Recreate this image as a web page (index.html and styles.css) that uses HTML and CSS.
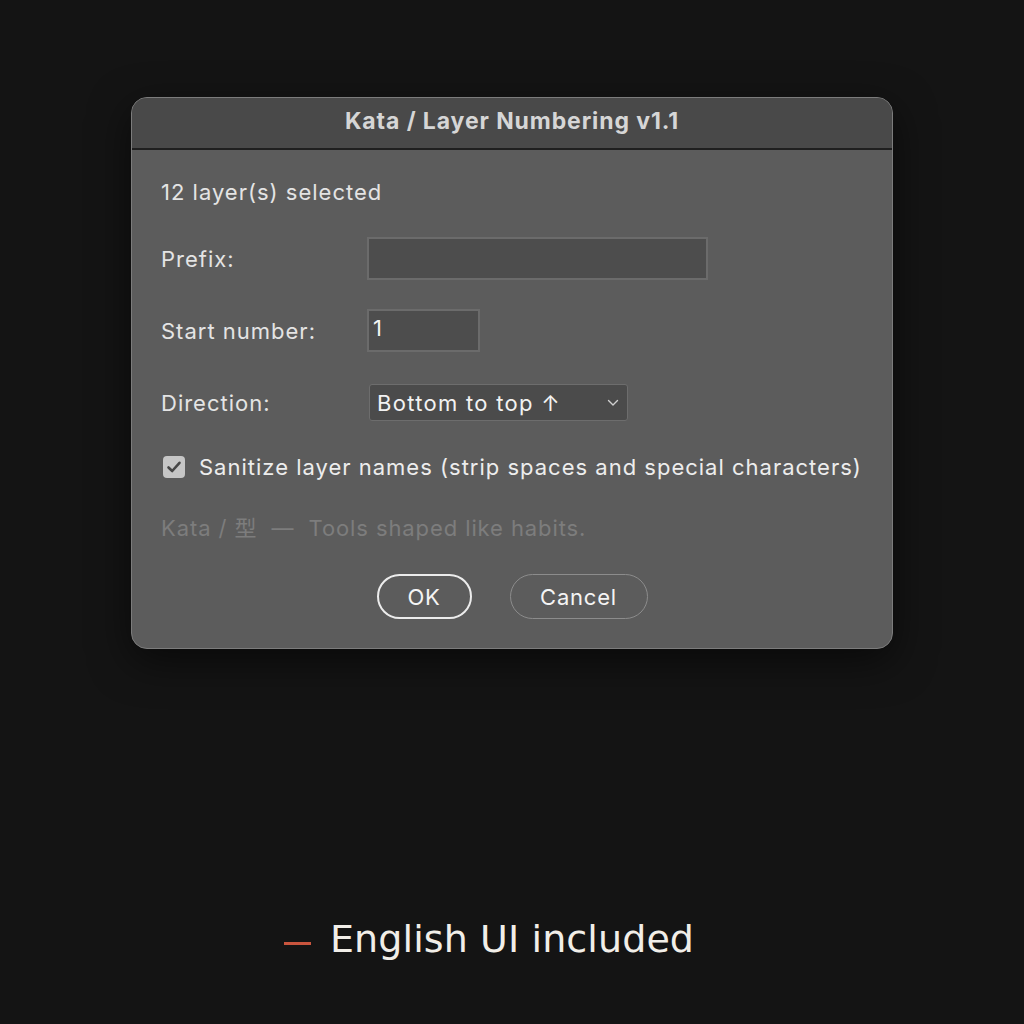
FILE: index.html
```html
<!doctype html>
<html lang="en">
<head>
    <meta charset="utf-8"/>
    <title>Kata / Layer Numbering</title>
    <link rel="stylesheet" href="styles.css">
</head>
<body>
    <div class="page">
        <div class="dialog">
            <div class="titlebar">Kata / Layer Numbering v1.1</div>
            <div class="content">
                <div class="count">12 layer(s) selected</div>
                <div class="rows">
                    <div class="row">
                        <label class="label">Prefix:</label>
                        <div class="field wide"></div>
                    </div>
                    <div class="row">
                        <label class="label">Start number:</label>
                        <div class="field short">1</div>
                    </div>
                    <div class="row">
                        <label class="label">Direction:</label>
                        <div class="select">
                            <span>Bottom to top ↑</span>
                            <svg class="chevron" width="12" height="8" viewBox="0 0 12 8">
                                <path d="M1.5 1.5 L6 6 L10.5 1.5" fill="none" stroke="#d0d0d0" stroke-width="1.4" stroke-linecap="round" stroke-linejoin="round"/>
                            </svg>
                        </div>
                    </div>
                    <div class="check-row">
                        <span class="checkbox">
                            <svg width="22" height="22" viewBox="0 0 22 22">
                                <path d="M5.5 11.5 L9.2 15 L16.5 6.8" fill="none" stroke="#474747" stroke-width="2.6" stroke-linecap="round" stroke-linejoin="round"/>
                            </svg>
                        </span>
                        <span>Sanitize layer names (strip spaces and special characters)</span>
                    </div>
                </div>
                <div class="tagline">Kata / 型 &nbsp;—&nbsp; Tools shaped like habits.</div>
                <div class="buttons">
                    <button class="btn ok">OK</button>
                    <button class="btn cancel">Cancel</button>
                </div>
            </div>
        </div>

        <div class="caption">
            <span class="dash"></span>
            <span>English UI included</span>
        </div>
    </div>
</body>
</html>
```
FILE: styles.css
```css
body {
    margin: 0;
    background: #141414;
    font-family: Inter, "Noto Sans", "Noto Sans CJK JP", sans-serif;
}

.page {
    padding-top: 97px;
    height: 927px;
}

.dialog {
    width: 760px;
    margin: 0 auto;
    background: #5c5c5c;
    border: 1px solid #7c7c7c;
    border-radius: 16px;
    box-shadow: 0 12px 40px rgba(0, 0, 0, 0.55);
    overflow: hidden;
}

.titlebar {
    height: 50px;
    line-height: 47px;
    background: #494949;
    border-bottom: 2px solid #1f1f1f;
    text-align: center;
    color: #d6d6d6;
    font-size: 23px;
    font-weight: 700;
    letter-spacing: 0.9px;
}

.content {
    padding: 28px 29px 29px;
    font-size: 22px;
    letter-spacing: 1px;
    color: #e4e4e4;
}

.count {
    line-height: 28px;
}

.rows {
    display: flex;
    flex-direction: column;
    gap: 29px;
    margin-top: 31px;
}

.row {
    display: flex;
    align-items: center;
    height: 43px;
}

.label {
    width: 206px;
    flex: none;
}

.field {
    box-sizing: border-box;
    height: 43px;
    background: #4d4d4d;
    border: 2px solid #6b6b6b;
    color: #f4f4f4;
    padding: 2px 4px;
    line-height: 32px;
    font-size: 22px;
}
.field.wide {
    width: 341px;
}
.field.short {
    width: 113px;
    line-height: 30px;
}

.select {
    box-sizing: border-box;
    width: 259px;
    height: 37px;
    margin-left: 2px;
    display: flex;
    align-items: center;
    justify-content: space-between;
    padding: 0 8px 0 7px;
    background: #4b4b4b;
    border: 1px solid #6d6d6d;
    border-radius: 3px;
    color: #f2f2f2;
    letter-spacing: 1.3px;
}

.check-row {
    display: flex;
    align-items: center;
    gap: 14px;
    height: 28px;
    color: #ededed;
    margin-left: 2px;
}

.checkbox {
    width: 22px;
    height: 22px;
    border-radius: 4px;
    background: #c6c6c6;
    display: flex;
}

.tagline {
    margin-top: 33px;
    line-height: 28px;
    color: #7d7d7d;
    letter-spacing: 0.9px;
}

.buttons {
    display: flex;
    justify-content: center;
    gap: 38px;
    margin-top: 32px;
}

.btn {
    box-sizing: border-box;
    height: 45px;
    padding: 0;
    border-radius: 23px;
    background: transparent;
    border: 1.5px solid #8c8c8c;
    color: #f4f4f4;
    font-family: inherit;
    font-size: 22px;
    letter-spacing: 0.8px;
}
.btn.ok {
    width: 95px;
    border: 2px solid #ececec;
}
.btn.cancel {
    width: 138px;
}

.caption {
    display: flex;
    align-items: center;
    gap: 19px;
    margin-top: 268px;
    padding-left: 284px;
    font-family: "DejaVu Sans", sans-serif;
    font-size: 38px;
    letter-spacing: 0.1px;
    color: #f1eee8;
}

.dash {
    width: 27px;
    height: 3px;
    margin-top: 8px;
    background: #c9553e;
}
```
